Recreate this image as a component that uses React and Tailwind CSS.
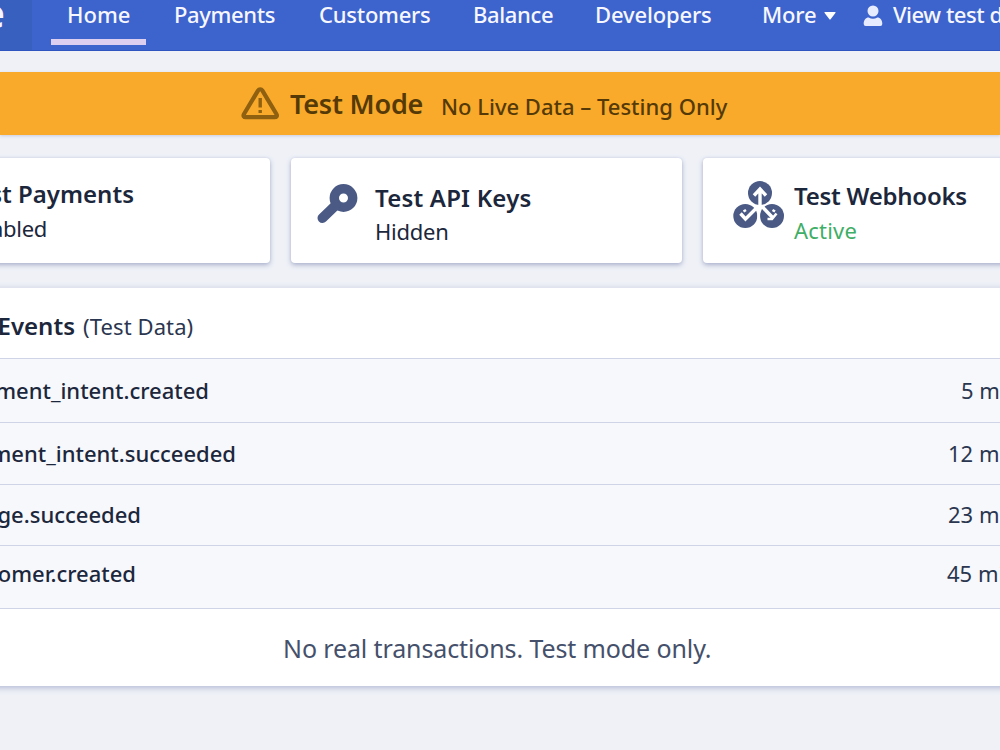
import clsx from "clsx";

const navItems = [
  { label: "Home", width: "w-[95px]", active: true },
  { label: "Payments", width: "w-[145px]", tracking: "tracking-[-0.35px]" },
  { label: "Customers", width: "w-[154px]", tracking: "tracking-[-0.25px]" },
  { label: "Balance", width: "w-[122px]", tracking: "tracking-[-0.35px]" },
  { label: "Developers", width: "w-[160px]", tracking: "tracking-[-0.15px]" },
];

const events = [
  { name: "payment_intent.created", time: "5 min ago", row: "h-[64px]", nameBox: "w-[249px]", timeBox: "w-[139px]" },
  { name: "payment_intent.succeeded", time: "12 min ago", row: "h-[62px]", nameBox: "w-[276px]", timeBox: "w-[152px]" },
  { name: "charge.succeeded", time: "23 min ago", row: "h-[61px] pb-[2px]", nameBox: "w-[181px]", timeBox: "w-[152px]" },
  { name: "customer.created", time: "45 min ago", row: "h-[63px] pb-[7px]", nameBox: "w-[176px]", timeBox: "w-[153px]" },
];

function WarningIcon() {
  return (
    <svg viewBox="0 0 40 34" className="h-[34px] w-10 shrink-0" fill="none" stroke="#8f6010">
      <path d="M18 4.600 4 28c-1.100 1.900-.2 3.200 1.800 3.200h28.800c2 0 2.900-1.300 1.800-3.200L22.400 4.600c-1.100-1.800-3.300-1.800-4.400 0Z" strokeWidth="4.200" strokeLinejoin="round" />
      <path d="M20.200 12v9.500M20.200 24v3" strokeWidth="3.400" />
    </svg>
  );
}

function KeyIcon() {
  return (
    <svg viewBox="0 0 42 42" className="h-[42px] w-[42px] shrink-0" fill="none" stroke="#4a5a85">
      <circle cx="27.500" cy="15" r="9.200" strokeWidth="9.400" />
      <path d="M20 22 6.500 35" strokeWidth="10" strokeLinecap="round" />
    </svg>
  );
}

function WebhookIcon() {
  return (
    <svg viewBox="0 0 52 50" className="h-[50px] w-[52px] shrink-0">
      <g fill="#4a5a85">
        <circle cx="27" cy="13" r="12" />
        <circle cx="12.300" cy="36" r="12" />
        <circle cx="39" cy="36" r="12" />
      </g>
      <g fill="none" stroke="#fff" strokeWidth="3.400">
        <path d="M27 28V9.500M21 15.500l6-6.500 6 6.500" />
        <path d="m7.500 33.500 5 5.500L25 26.500M29 26.500l11 11.500" />
        <path d="M25.700 26v23" strokeWidth="2.800" />
        <path d="M34.500 39h4.500l4.500-5.500M10.500 31.500l2.500-1.500M39.500 30l2.500 1.500" strokeWidth="2.600" />
      </g>
    </svg>
  );
}

function Header() {
  return (
    <header className="flex h-[51px] overflow-hidden border-b border-[#2f55c0] bg-[#3d63cd] text-[22px] font-medium whitespace-nowrap text-[#f6f7ff]">
      <div className="flex h-full w-8 shrink-0 justify-end bg-[#3760bf] pr-[27px]">
        <span className="mt-[-9px] text-[40px] leading-[44px] font-bold">stripe</span>
      </div>
      <nav className="ml-[19px] flex shrink-0">
        {navItems.map((item) => (
          <a key={item.label} className={clsx("flex shrink-0 flex-col", item.width, item.tracking)}>
            <span className={clsx("h-[29px] leading-[29px]", item.active ? "pl-4" : "pl-[28px]")}>{item.label}</span>
            {item.active && <span className="mt-[10px] h-[6px] bg-[#dccff0]" />}
          </a>
        ))}
      </nav>
      <div className="flex h-[29px] shrink-0 items-center pl-[35px]">
        <span className="w-[54px] tracking-[-0.2px]">More</span>
        <svg viewBox="0 0 12 8" className="mt-[3px] ml-2 h-2 w-3 fill-white">
          <path d="M1 0h10q1 0 .4 1L6.800 7q-.8 1-1.600 0L.6 1Q0 0 1 0Z" />
        </svg>
      </div>
      <div className="ml-[27px] flex h-[29px] shrink-0 items-center">
        <svg viewBox="0 0 20 22" className="mt-[2px] h-[22px] w-5 fill-[#e6ebff]">
          <circle cx="10" cy="6" r="5.500" />
          <path d="M.7 19c0-4 2-6.500 5-6.500q4.300 2.500 8.600 0c3 0 5 2.500 5 6.500q0 2-2 2H2.700q-2 0-2-2Z" />
        </svg>
        <span className="ml-2.5 tracking-[-0.45px]">View test data</span>
      </div>
    </header>
  );
}

function Card({ className, children }) {
  return (
    <section className={clsx("flex h-[105px] shrink-0 rounded-[4px] bg-white shadow-[0_2px_5px_#aab2cc,0_0_2px_#d5d9ea]", className)}>
      {children}
    </section>
  );
}

export default function App() {
  return (
    <div className="h-[750px] w-[1000px] overflow-hidden bg-[#eff1f7] font-['Noto_Sans',sans-serif] whitespace-nowrap text-[#1c273c]">
      <Header />

      <div className="mt-[21px] flex h-[63px] bg-[#f9aa2b] pl-[240px] text-[#553a08] shadow-[0_1px_3px_#c9cce0]">
        <div className="mt-[14px]">
          <WarningIcon />
        </div>
        <span className="ml-[10px] w-[151px] shrink-0 text-[27px] leading-[64px] font-semibold tracking-[-0.2px]">Test Mode</span>
        <span className="text-[22px] leading-[69px] font-medium">No Live Data – Testing Only</span>
      </div>

      <div className="mt-[23px] -ml-[120px] flex gap-[21px]">
        <Card className="w-[390px] justify-end">
          <div className="flex w-[300px] flex-col pt-[18px]">
            <h2 className="flex w-[164px] justify-end text-[24px] leading-9 font-semibold">Test Payments</h2>
            <p className="flex w-[77px] justify-end text-[22px] leading-[33px] tracking-[-0.3px]">Enabled</p>
          </div>
        </Card>
        <Card className="w-[391px] pl-[25px]">
          <div className="mt-[25px]">
            <KeyIcon />
          </div>
          <div className="ml-[17px] pt-[22px]">
            <h2 className="text-[24px] leading-9 font-semibold tracking-[0.2px]">Test API Keys</h2>
            <p className="text-[22px] leading-[31px] tracking-[-0.25px]">Hidden</p>
          </div>
        </Card>
        <Card className="w-[391px] pl-[30px]">
          <div className="mt-[22px]">
            <WebhookIcon />
          </div>
          <div className="ml-[9px] pt-[20px]">
            <h2 className="text-[24px] leading-9 font-semibold tracking-[-0.25px]">Test Webhooks</h2>
            <p className="text-[22px] leading-[33px] tracking-[0.2px] text-[#3fae66]">Active</p>
          </div>
        </Card>
      </div>

      <section className="mt-[24px] -ml-10 w-[1140px] border-t border-[#e1e4ee] bg-white shadow-[0_2px_6px_#b4bbd6]">
        <div className="flex h-[70px] items-center pt-[6px]">
          <h2 className="flex w-[115px] justify-end text-[24px] font-semibold">Recent Events</h2>
          <span className="ml-2 text-[22px] tracking-[0.1px] text-[#2b364f]">(Test Data)</span>
        </div>
        <ul className="bg-[#f7f8fc] text-[22px]">
          {events.map((event) => (
            <li key={event.name} className={clsx("flex items-center justify-between border-t border-[#cfd4e6]", event.row)}>
              <span className={clsx("flex justify-end font-medium", event.nameBox)}>{event.name}</span>
              <span className={clsx("text-[#2b364f]", event.timeBox)}>{event.time}</span>
            </li>
          ))}
        </ul>
        <p className="h-[78px] border-t border-[#cfd4e6] pl-[323px] text-[25px] leading-[78px] tracking-[-0.12px] text-[#45506b]">
          No real transactions. Test mode only.
        </p>
      </section>
    </div>
  );
}
